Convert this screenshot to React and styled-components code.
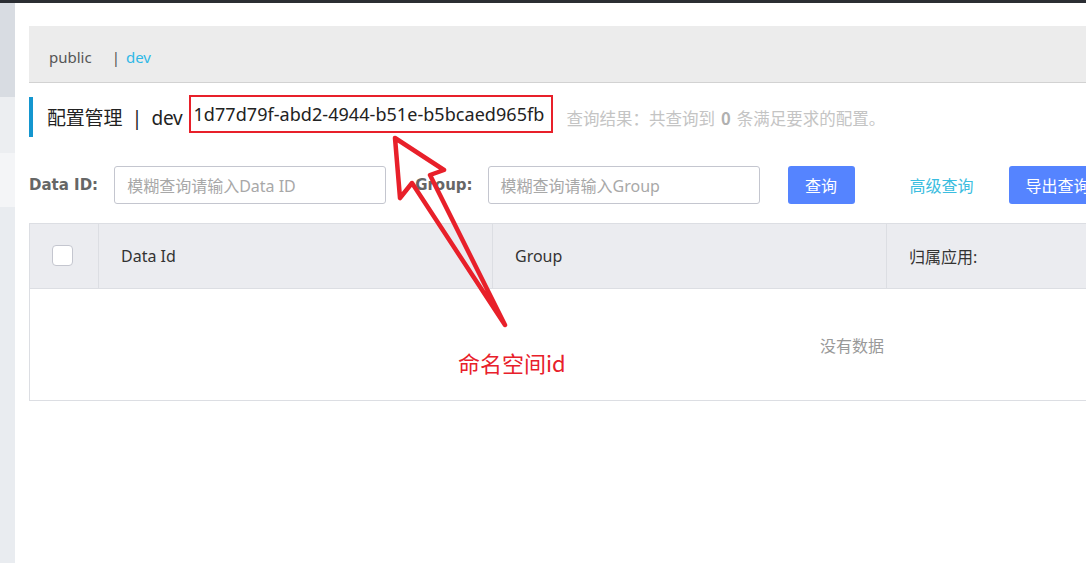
import React from 'react';
import styled, { createGlobalStyle } from 'styled-components';

const GlobalStyle = createGlobalStyle`
  html, body {
    margin: 0;
    padding: 0;
    background: #fff;
    font-family: "Noto Sans", "Noto Sans CJK SC", sans-serif;
    overflow: hidden;
  }
`

const Page = styled.div`
  position: relative;
  width: 1086px;
  height: 563px;
  overflow: hidden;
  display: flex;
  flex-direction: column;
`

const TopBar = styled.div`
  height: 3px;
  background: #2b2e33;
  flex-shrink: 0;
`

const Body = styled.div`
  flex: 1;
  display: flex;
  min-height: 0;
`

const Sidebar = styled.div`
  width: 15px;
  flex-shrink: 0;
  display: flex;
  flex-direction: column;
`

const SideBand = styled.div`
  height: ${p => p.h ? `${p.h}px` : 'auto'};
  flex: ${p => p.h ? '0 0 auto' : 1};
  background: ${p => p.bg};
`

const Main = styled.div`
  flex: 1;
  min-width: 0;
  overflow: hidden;
  padding: 23px 0 0 14px;
`

const NamespaceBar = styled.div`
  height: 57px;
  box-sizing: border-box;
  padding: 5px 0 0 20px;
  background: #ececec;
  border-bottom: 1px solid #d2d2d2;
  display: flex;
  align-items: center;
  font-size: 15px;
  color: #666;
`

const NsItem = styled.span`
  color: ${p => p.active ? '#2fb8e6' : '#555'};
  margin-right: ${p => p.gap || 0}px;
`

const TitleRow = styled.div`
  margin-top: 14px;
  height: 40px;
  display: flex;
  align-items: center;
  border-left: 4px solid #1496cf;
  padding-left: 14px;
`

const Title = styled.span`
  font-size: 19px;
  color: #222;
  white-space: nowrap;
  letter-spacing: -0.2px;
`

const IdBox = styled.span`
  margin-left: 6px;
  margin-top: -6px;
  border: 2px solid #e8202a;
  height: 38px;
  box-sizing: border-box;
  padding: 0 7px 0 3px;
  display: flex;
  align-items: center;
  font-size: 18px;
  letter-spacing: 0.05px;
  color: #222;
  white-space: nowrap;
`

const ResultText = styled.span`
  margin-left: 13px;
  margin-top: 1px;
  font-size: 16.5px;
  color: #c4c4c4;
  white-space: nowrap;
  font-family: "Noto Sans CJK SC", sans-serif;

  b {
    color: #b0b0b0;
    font-weight: 700;
    margin: 0 6px;
  }
`

const SearchRow = styled.div`
  margin-top: 29px;
  display: flex;
  align-items: center;
  height: 37px;
`

const Label = styled.span`
  font-family: "DejaVu Sans", sans-serif;
  font-size: 15px;
  font-weight: 700;
  color: #666;
  margin-right: ${p => p.gap}px;
  white-space: nowrap;
`

const Input = styled.div`
  width: 272px;
  height: 38px;
  box-sizing: border-box;
  border: 1px solid #c4c6cf;
  border-radius: 3px;
  padding-left: 12px;
  display: flex;
  align-items: center;
  font-size: 16px;
  color: #a8a8a8;
  margin-right: ${p => p.gap}px;
  flex-shrink: 0;
  white-space: nowrap;
`

const Button = styled.div`
  height: 38px;
  width: ${p => p.w}px;
  box-sizing: border-box;
  background: #5584ff;
  border-radius: 3px;
  color: #fff;
  font-size: 16px;
  display: flex;
  align-items: center;
  justify-content: ${p => p.left ? 'flex-start' : 'center'};
  padding-left: ${p => p.left ? 17 : 0}px;
  margin-right: ${p => p.gap || 0}px;
  flex-shrink: 0;
  white-space: nowrap;
  overflow: hidden;
`

const Link = styled.span`
  font-size: 16px;
  color: #3bbde0;
  margin-right: 35px;
  white-space: nowrap;
`

const Table = styled.div`
  margin-top: 20px;
  width: 1646px;
  border: 1px solid #dcdee3;
  box-sizing: border-box;
`

const HeadRow = styled.div`
  display: grid;
  grid-template-columns: 69px 394px 394px 1fr;
  height: 64px;
  background: #ebecf0;
  border-bottom: 1px solid #dcdee3;
`

const HeadCell = styled.div`
  display: flex;
  align-items: center;
  justify-content: ${p => p.center ? 'center' : 'flex-start'};
  padding-left: ${p => p.center ? 0 : 22}px;
  border-right: ${p => p.last ? 'none' : '1px solid #dcdee3'};
  font-size: 16px;
  color: #333;
`

const Checkbox = styled.span`
  width: 21px;
  height: 21px;
  box-sizing: border-box;
  background: #fff;
  border: 1px solid #c4c6cf;
  border-radius: 4px;
  margin-left: -4px;
  margin-top: -2px;
`

const Empty = styled.div`
  height: 111px;
  display: flex;
  align-items: center;
  justify-content: center;
  font-size: 16px;
  color: #999;
`

const ArrowLayer = styled.svg`
  position: absolute;
  left: 0;
  top: 0;
  pointer-events: none;
`

const Note = styled.span`
  position: absolute;
  left: 458px;
  top: 346px;
  font-size: 22px;
  color: #e8202a;
  font-family: "Noto Sans CJK SC", "Noto Sans", sans-serif;
`

export default function App() {
  return (
    <Page>
      <GlobalStyle />
      <TopBar />
      <Body>
        <Sidebar>
          <SideBand h={94} bg="#d8dce2" />
          <SideBand h={56} bg="#eceef1" />
          <SideBand h={54} bg="#f4f5f7" />
          <SideBand bg="#e9ecf0" />
        </Sidebar>
        <Main>
          <NamespaceBar>
            <NsItem gap={20}>public</NsItem>
            <NsItem gap={6}>|</NsItem>
            <NsItem active>dev</NsItem>
          </NamespaceBar>

          <TitleRow>
            <Title>配置管理&nbsp;&nbsp;|&nbsp;&nbsp;dev</Title>
            <IdBox>1d77d79f-abd2-4944-b51e-b5bcaed965fb</IdBox>
            <ResultText>查询结果：共查询到<b>0</b>条满足要求的配置。</ResultText>
          </TitleRow>

          <SearchRow>
            <Label gap={16}>Data ID:</Label>
            <Input gap={29}>模糊查询请输入Data ID</Input>
            <Label gap={15}>Group:</Label>
            <Input gap={28}>模糊查询请输入Group</Input>
            <Button w={67} gap={55}>查询</Button>
            <Link>高级查询</Link>
            <Button w={110} left>导出查询结果</Button>
          </SearchRow>

          <Table>
            <HeadRow>
              <HeadCell center><Checkbox /></HeadCell>
              <HeadCell>Data Id</HeadCell>
              <HeadCell>Group</HeadCell>
              <HeadCell last>归属应用:</HeadCell>
            </HeadRow>
            <Empty>没有数据</Empty>
          </Table>
        </Main>
      </Body>

      <ArrowLayer width="1086" height="563" viewBox="0 0 1086 563">
        <polygon
          points="395,138 444,170 430,175 505,325 412,183 400,198"
          fill="none"
          stroke="#e8202a"
          strokeWidth="4.5"
          strokeLinejoin="round"
          strokeLinecap="round"
        />
      </ArrowLayer>
      <Note>命名空间id</Note>
    </Page>
  );
}
